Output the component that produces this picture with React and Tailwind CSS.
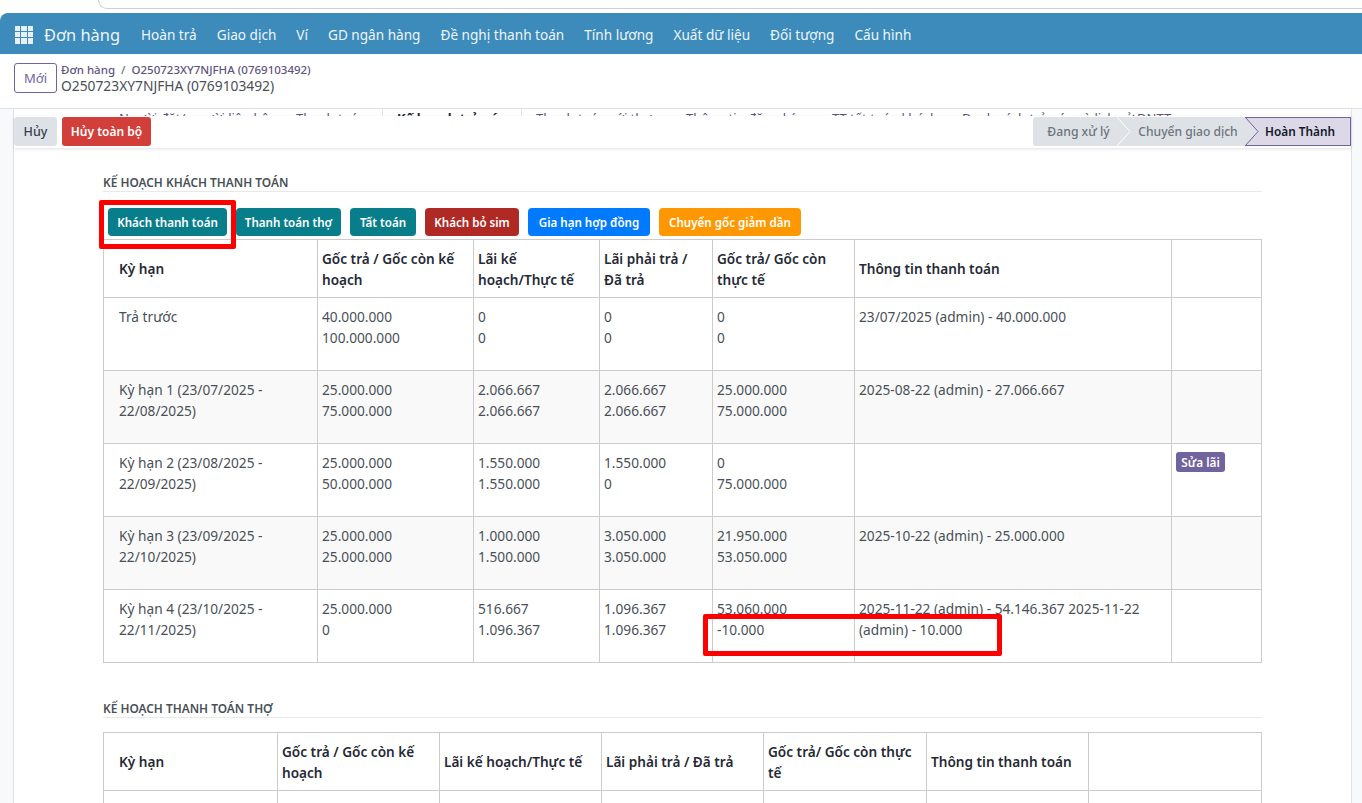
import React from 'react';

const NAV = ['Hoàn trả', 'Giao dịch', 'Ví', 'GD ngân hàng', 'Đề nghị thanh toán', 'Tính lương', 'Xuất dữ liệu', 'Đối tượng', 'Cấu hình'];

const ACTIONS = [
    { label: 'Khách thanh toán', className: 'bg-[#087e8b] ml-[5px] w-[119px]' },
    { label: 'Thanh toán thợ', className: 'bg-[#087e8b] w-[105px]' },
    { label: 'Tất toán', className: 'bg-[#087e8b] w-[66px]' },
    { label: 'Khách bỏ sim', className: 'bg-[#b02a25] w-[94px]' },
    { label: 'Gia hạn hợp đồng', className: 'bg-[#007bff] w-[122px]' },
    { label: 'Chuyển gốc giảm dần', className: 'bg-[#ff9800] w-[142px]' },
];

const ROWS = [
    { term: 'Trả trước', a: ['40.000.000', '100.000.000'], b: ['0', '0'], c: ['0', '0'], d: ['0', '0'], info: '23/07/2025 (admin) - 40.000.000' },
    { term: 'Kỳ hạn 1 (23/07/2025 - 22/08/2025)', a: ['25.000.000', '75.000.000'], b: ['2.066.667', '2.066.667'], c: ['2.066.667', '2.066.667'], d: ['25.000.000', '75.000.000'], info: '2025-08-22 (admin) - 27.066.667' },
    { term: 'Kỳ hạn 2 (23/08/2025 - 22/09/2025)', a: ['25.000.000', '50.000.000'], b: ['1.550.000', '1.550.000'], c: ['1.550.000', '0'], d: ['0', '75.000.000'], info: '', edit: true },
    { term: 'Kỳ hạn 3 (23/09/2025 - 22/10/2025)', a: ['25.000.000', '25.000.000'], b: ['1.000.000', '1.500.000'], c: ['3.050.000', '3.050.000'], d: ['21.950.000', '53.050.000'], info: '2025-10-22 (admin) - 25.000.000' },
    { term: 'Kỳ hạn 4 (23/10/2025 - 22/11/2025)', a: ['25.000.000', '0'], b: ['516.667', '1.096.367'], c: ['1.096.367', '1.096.367'], d: ['53.060.000', '-10.000'], info: '2025-11-22 (admin) - 54.146.367 2025-11-22 (admin) - 10.000' },
];

const th = 'border border-[#cccccc] px-1 align-middle text-left text-[13.6px] font-semibold text-[#262a36]';
const td = 'border border-[#cccccc] px-1 pt-[8px] align-top text-[13.7px] font-normal text-[#495057]';

function Pair({ values }) {
    return (
        <>
            <div>{values[0]}</div>
            <div>{values[1]}</div>
        </>
    );
}

function SectionTitle({ children }) {
    return (
        <div className="h-[19px] border-b border-[#e7e9ed] text-[11.9px] font-semibold leading-[18px] text-[#495057] uppercase">
            {children}
        </div>
    );
}

function Chevron({ fill, stroke }) {
    return (
        <svg width="14" height="29" viewBox="0 0 14 29" className="absolute top-0 left-full z-10 -ml-px block">
            <path d="M0 0 L13 14.5 L0 29 Z" fill={fill} />
            <path d="M0 0 L13 14.5 L0 29" fill="none" stroke={stroke} strokeWidth="1" />
        </svg>
    );
}

export default function App() {
    return (
        <div className="relative h-[803px] overflow-hidden bg-white font-['Noto_Sans',sans-serif] text-[13px] leading-[21px]">
            {/* browser chrome leftover */}
            <div className="h-[13px] bg-white">
                <div className="ml-[98px] h-[9px] rounded-bl-[10px] border-b border-l border-[#cfcfcf]" />
            </div>

            {/* Navbar */}
            <div className="flex h-[41px] items-center rounded-tl-[8px] bg-[#3c8bbb] pt-[2px] text-[#eef5f9]">
                <div className="ml-[15px] grid h-[18px] w-[18px] grid-cols-3 gap-px">
                    {[...Array(9)].map((_, i) => (
                        <span key={i} className="bg-[#e6f0f6]" />
                    ))}
                </div>
                <span className="ml-[11px] w-[76px] shrink-0 whitespace-nowrap text-[16.4px]">Đơn hàng</span>
                <div className="ml-[21px] flex gap-[20px]">
                    {NAV.map((item) => (
                        <span key={item} className="text-[13.6px]">{item}</span>
                    ))}
                </div>
            </div>

            {/* Control panel */}
            <div className="flex h-[55px] items-start gap-[4px] border-b border-[#dee2e6] pl-[14px] pt-[8px]">
                <button className="mt-[1px] h-[30px] w-[43px] rounded-[3px] border border-[#71639e] text-[13px] text-[#71639e]">Mới</button>
                <div>
                    <div className="flex h-[15px] items-center text-[11.5px] font-medium leading-[15px] text-[#5f5480]">
                        <span>Đơn hàng</span>
                        <span className="mx-[6px] text-[#6c757d]">/</span>
                        <span>O250723XY7NJFHA (0769103492)</span>
                    </div>
                    <div className="text-[13.8px] leading-[18px] text-[#495057]">O250723XY7NJFHA (0769103492)</div>
                </div>
            </div>

            <div className="flex h-[694px]">
                <div className="w-[14px] shrink-0 border-r border-[#dee2e6] bg-[#f8f9fb]" />
                <div className="relative w-[1337px] shrink-0 bg-white">
                    <div className="flex h-[7px] overflow-hidden text-[13px] leading-[18px] text-[#5f5480]">
                        <span className="ml-[105px] w-[177px] shrink-0 whitespace-nowrap">Người đặt/ người liên hệ</span>
                        <span className="w-[86px] shrink-0 whitespace-nowrap">Thanh toán</span>
                        <span className="w-[15px] shrink-0 border-l border-[#dee2e6]" />
                        <span className="w-[124px] shrink-0 whitespace-nowrap font-bold text-[#262a36]">Kế hoạch trả góp</span>
                        <span className="w-[15px] shrink-0 border-l border-[#dee2e6]" />
                        <span className="w-[150px] shrink-0 whitespace-nowrap">Thanh toán với thợ</span>
                        <span className="w-[146px] shrink-0 whitespace-nowrap">Thông tin đăng ký</span>
                        <span className="w-[130px] shrink-0 whitespace-nowrap">TT tất toán khách</span>
                        <span className="shrink-0 whitespace-nowrap">Danh sách trả góp và lịch sử DNTT</span>
                    </div>

                    {/* Status bar */}
                    <div className="relative z-10 flex h-[32px] items-start justify-between bg-white pt-[1px] shadow-[0_1px_3px_rgba(0,0,0,0.12)]">
                        <div className="flex gap-[5px]">
                            <button className="h-[29px] w-[43px] rounded-[3px] bg-[#dee2e6] text-[12.5px] font-medium text-[#374151]">Hủy</button>
                            <button className="h-[29px] w-[89px] rounded-[3px] bg-[#d23f3a] text-[12px] font-semibold text-white">Hủy toàn bộ</button>
                        </div>
                        <div className="flex">
                            <div className="relative">
                                <div className="flex h-[29px] w-[85px] items-center justify-center rounded-l-[3px] bg-[#dee2e6] pl-[6px] text-[12.2px] font-medium text-[#6c757d]">
                                    Đang xử lý
                                </div>
                                <Chevron fill="#dee2e6" stroke="#ffffff" />
                            </div>
                            <div className="relative">
                                <div className="flex h-[29px] w-[128px] items-center justify-center bg-[#dee2e6] pl-[12px] text-[12.1px] font-medium text-[#6c757d]">
                                    Chuyển giao dịch
                                </div>
                                <Chevron fill="#dee2e6" stroke="#71639e" />
                            </div>
                            <div className="flex h-[29px] w-[105px] items-center justify-end border border-[#71639e] bg-[#dcd8e8] pr-[15px] text-[11.8px] font-semibold text-[#111827]">
                                Hoàn Thành
                            </div>
                        </div>
                    </div>

                    <div className="pl-[89px] pr-[89px] pt-[25px]">
                        <SectionTitle>Kế hoạch khách thanh toán</SectionTitle>
                        <div className="flex h-[47px] items-center gap-[9px] pt-[15px] pb-[3px]">
                            {ACTIONS.map((a) => (
                                <button key={a.label} className={`h-[28px] shrink-0 rounded-[4px] pt-[2px] text-[11.6px] font-semibold text-white ${a.className}`}>
                                    {a.label}
                                </button>
                            ))}
                        </div>

                        <table className="w-[1158px] table-fixed border-collapse">
                            <colgroup>
                                <col className="w-[214px]" />
                                <col className="w-[156px]" />
                                <col className="w-[126px]" />
                                <col className="w-[113px]" />
                                <col className="w-[142px]" />
                                <col className="w-[317px]" />
                                <col className="w-[90px]" />
                            </colgroup>
                            <thead>
                                <tr className="h-[58px]">
                                    <th className={`${th} pl-[15px]`}>Kỳ hạn</th>
                                    <th className={th}>Gốc trả / Gốc còn kế<br />hoạch</th>
                                    <th className={th}>Lãi kế<br />hoạch/Thực tế</th>
                                    <th className={th}>Lãi phải trả /<br />Đã trả</th>
                                    <th className={th}>Gốc trả/ Gốc còn<br />thực tế</th>
                                    <th className={th}>Thông tin thanh toán</th>
                                    <th className={th}></th>
                                </tr>
                            </thead>
                            <tbody>
                                {ROWS.map((r, i) => (
                                    <tr key={r.term} className={`h-[73px] ${i % 2 === 1 ? 'bg-[#f9f9f9]' : ''}`}>
                                        <td className={`${td} pl-[15px] pr-[30px]`}>{r.term}</td>
                                        <td className={td}><Pair values={r.a} /></td>
                                        <td className={td}><Pair values={r.b} /></td>
                                        <td className={td}><Pair values={r.c} /></td>
                                        <td className={td}><Pair values={r.d} /></td>
                                        <td className={td}>{r.info}</td>
                                        <td className={td}>
                                            {r.edit && (
                                                <button className="block h-[20px] w-[49px] rounded-[3px] bg-[#71639e] text-[11.8px] font-semibold leading-[20px] text-white">
                                                    Sửa lãi
                                                </button>
                                            )}
                                        </td>
                                    </tr>
                                ))}
                            </tbody>
                        </table>

                        <div className="mt-[36px]">
                            <SectionTitle>Kế hoạch thanh toán thợ</SectionTitle>
                        </div>
                        <table className="mt-[14px] w-[1158px] table-fixed border-collapse">
                            <colgroup>
                                <col className="w-[174px]" />
                                <col className="w-[162px]" />
                                <col className="w-[162px]" />
                                <col className="w-[162px]" />
                                <col className="w-[163px]" />
                                <col className="w-[162px]" />
                                <col className="w-[173px]" />
                            </colgroup>
                            <thead>
                                <tr className="h-[58px]">
                                    <th className={`${th} pl-[15px]`}>Kỳ hạn</th>
                                    <th className={th}>Gốc trả / Gốc còn kế hoạch</th>
                                    <th className={th}>Lãi kế hoạch/Thực tế</th>
                                    <th className={th}>Lãi phải trả / Đã trả</th>
                                    <th className={th}>Gốc trả/ Gốc còn thực tế</th>
                                    <th className={th}>Thông tin thanh toán</th>
                                    <th className={th}></th>
                                </tr>
                            </thead>
                            <tbody>
                                <tr className="h-[73px]">
                                    <td className={td}></td>
                                    <td className={td}></td>
                                    <td className={td}></td>
                                    <td className={td}></td>
                                    <td className={td}></td>
                                    <td className={td}></td>
                                    <td className={td}></td>
                                </tr>
                            </tbody>
                        </table>
                    </div>
                </div>
                <div className="flex-1 border-l border-[#dee2e6] bg-[#f8f9fb]" />
            </div>

            {/* red annotation boxes drawn over the screenshot */}
            <div className="pointer-events-none absolute left-[99px] top-[200px] h-[49px] w-[137px] rounded-[2px] border-[5px] border-[#ff0000]" />
            <div className="pointer-events-none absolute left-[703px] top-[614px] h-[42px] w-[299px] rounded-[2px] border-[5px] border-[#ff0000]" />
        </div>
    );
}
